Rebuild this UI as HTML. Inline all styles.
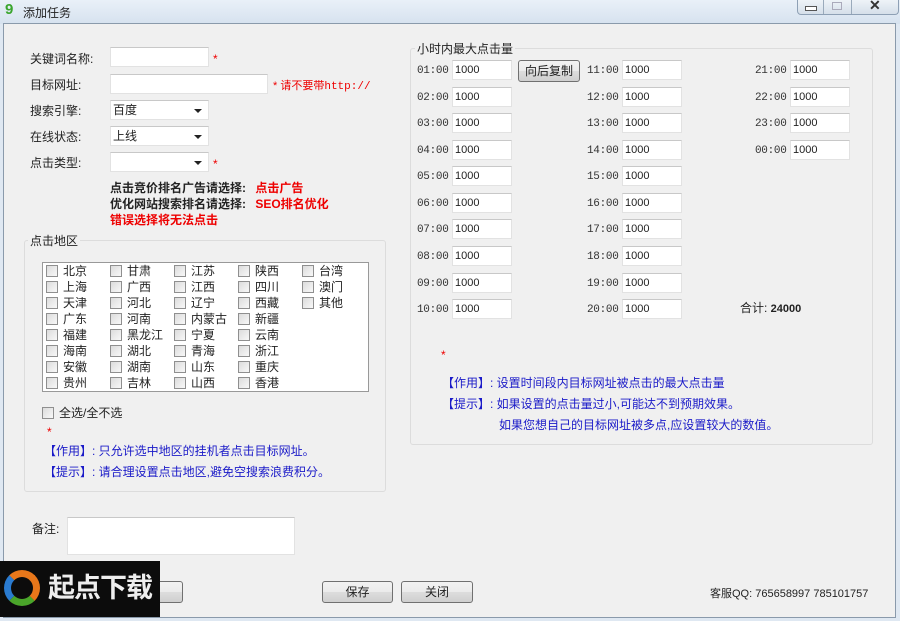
<!DOCTYPE html>
<html><head><meta charset="utf-8"><style>
*{margin:0;padding:0;box-sizing:border-box}
body{width:900px;height:621px;overflow:hidden;background:#dfe8f2;font-family:"Liberation Sans","Noto Sans CJK SC","WenQuanYi Zen Hei",sans-serif;font-size:12px;color:#222;position:relative}
.a{position:absolute;white-space:nowrap}
.title{left:0;top:0;width:900px;height:24px;background:linear-gradient(#e9f0f8,#d6e2ef)}
.win{left:3px;top:23px;width:893px;height:595px;background:#f0f0f0;border:1px solid #8a9aab}
.in{position:absolute;background:#fff;border:1px solid #e2e2e2;border-top-color:#c8c8c8;height:20px;font-size:11px;padding:2px 2px;line-height:15px}
.sel:after{content:"";position:absolute;right:6px;top:8px;border:4px solid transparent;border-top:4px solid #222;border-bottom:0}
.red{color:#e00}
.blue{color:#1a1ac8}
.grp{position:absolute;border:1px solid #dcdcdc;border-radius:3px}
.gl{position:absolute;background:#f0f0f0;padding:0 2px;font-size:12px}
.cb{display:inline-block;width:12px;height:12px;border:1px solid #8f8f8f;background:linear-gradient(135deg,#dcdcdc,#f8f8f8);vertical-align:-2px;margin-right:5px}
.btn{position:absolute;height:22px;border:1px solid #707070;border-radius:3px;background:linear-gradient(#f2f2f2,#ebebeb 50%,#dddddd 51%,#cfcfcf);text-align:center;line-height:20px;font-size:12px}
.h{font-family:"Liberation Mono","DejaVu Sans Mono",monospace;font-size:11px;color:#333;letter-spacing:-0.3px;line-height:14px}
.rg{line-height:16px;font-size:12px}
</style></head><body>
<div class="a title"></div>
<div class="a" style="left:5px;top:2px;color:#3aa52d;font-weight:bold;font-size:15px;line-height:16px">9</div>
<div class="a" style="left:23px;top:4px;font-size:12px">添加任务</div>
<div class="a" style="left:797px;top:0;width:102px;height:15px;border:1px solid #8ea0b5;border-top:0;border-radius:0 0 4px 4px;background:linear-gradient(#eef3f8,#d5dfea)"></div>
<div class="a" style="left:823px;top:0;width:1px;height:14px;background:#9aaabb"></div>
<div class="a" style="left:851px;top:0;width:1px;height:14px;background:#9aaabb"></div>
<div class="a" style="left:805px;top:6px;width:12px;height:5px;border:1px solid #555;background:#fff"></div>
<div class="a" style="left:832px;top:2px;width:10px;height:8px;border:1px solid #aab"></div>
<div class="a" style="left:869px;top:-3px;font-size:14px;font-weight:bold;color:#333">✕</div>
<div class="a win"></div>

<div class="a" style="left:30px;top:50px">关键词名称:</div>
<div class="in" style="left:110px;top:47px;width:99px"></div>
<div class="a red" style="left:213px;top:52px">*</div>
<div class="a" style="left:30px;top:76px">目标网址:</div>
<div class="in" style="left:110px;top:74px;width:158px"></div>
<div class="a red" style="left:273px;top:77px;font-size:11px">* 请不要带<span style="font-family:'Liberation Mono',monospace">http://</span></div>
<div class="a" style="left:30px;top:102px">搜索引擎:</div>
<div class="in sel" style="left:110px;top:100px;width:99px;font-size:12px">百度</div>
<div class="a" style="left:30px;top:128px">在线状态:</div>
<div class="in sel" style="left:110px;top:126px;width:99px;font-size:12px">上线</div>
<div class="a" style="left:30px;top:154px">点击类型:</div>
<div class="in sel" style="left:110px;top:152px;width:99px"></div>
<div class="a red" style="left:213px;top:157px">*</div>
<div class="a" style="left:110px;top:179px;font-weight:bold">点击竞价排名广告请选择: <span class="red" style="margin-left:6px">点击广告</span></div>
<div class="a" style="left:110px;top:195px;font-weight:bold">优化网站搜索排名请选择: <span class="red" style="margin-left:6px">SEO排名优化</span></div>
<div class="a red" style="left:110px;top:211px;font-weight:bold">错误选择将无法点击</div>

<div class="grp" style="left:24px;top:240px;width:362px;height:252px"></div>
<div class="gl" style="left:28px;top:232px">点击地区</div>
<div class="a" style="left:42px;top:262px;width:327px;height:130px;border:1px solid #999;background:#fff"></div>
<div class="a rg" style="left:46px;top:263px">
<span class="cb"></span>北京<br><span class="cb"></span>上海<br><span class="cb"></span>天津<br><span class="cb"></span>广东<br><span class="cb"></span>福建<br><span class="cb"></span>海南<br><span class="cb"></span>安徽<br><span class="cb"></span>贵州</div>
<div class="a rg" style="left:110px;top:263px">
<span class="cb"></span>甘肃<br><span class="cb"></span>广西<br><span class="cb"></span>河北<br><span class="cb"></span>河南<br><span class="cb"></span>黑龙江<br><span class="cb"></span>湖北<br><span class="cb"></span>湖南<br><span class="cb"></span>吉林</div>
<div class="a rg" style="left:174px;top:263px">
<span class="cb"></span>江苏<br><span class="cb"></span>江西<br><span class="cb"></span>辽宁<br><span class="cb"></span>内蒙古<br><span class="cb"></span>宁夏<br><span class="cb"></span>青海<br><span class="cb"></span>山东<br><span class="cb"></span>山西</div>
<div class="a rg" style="left:238px;top:263px">
<span class="cb"></span>陕西<br><span class="cb"></span>四川<br><span class="cb"></span>西藏<br><span class="cb"></span>新疆<br><span class="cb"></span>云南<br><span class="cb"></span>浙江<br><span class="cb"></span>重庆<br><span class="cb"></span>香港</div>
<div class="a rg" style="left:302px;top:263px">
<span class="cb"></span>台湾<br><span class="cb"></span>澳门<br><span class="cb"></span>其他</div>
<div class="a" style="left:42px;top:404px"><span class="cb"></span>全选/全不选</div>
<div class="a red" style="left:47px;top:425px">*</div>
<div class="a blue" style="left:44px;top:442px">【作用】: 只允许选中地区的挂机者点击目标网址。</div>
<div class="a blue" style="left:44px;top:463px">【提示】: 请合理设置点击地区,避免空搜索浪费积分。</div>

<div class="grp" style="left:410px;top:48px;width:463px;height:397px"></div>
<div class="gl" style="left:415px;top:40px">小时内最大点击量</div>
<div class="btn" style="left:518px;top:60px;width:62px">向后复制</div>

<div class="a h" style="left:417px;top:64px">01:00</div><div class="in" style="left:452px;top:60px;width:60px">1000</div>
<div class="a h" style="left:417px;top:91px">02:00</div><div class="in" style="left:452px;top:87px;width:60px">1000</div>
<div class="a h" style="left:417px;top:117px">03:00</div><div class="in" style="left:452px;top:113px;width:60px">1000</div>
<div class="a h" style="left:417px;top:144px">04:00</div><div class="in" style="left:452px;top:140px;width:60px">1000</div>
<div class="a h" style="left:417px;top:170px">05:00</div><div class="in" style="left:452px;top:166px;width:60px">1000</div>
<div class="a h" style="left:417px;top:197px">06:00</div><div class="in" style="left:452px;top:193px;width:60px">1000</div>
<div class="a h" style="left:417px;top:223px">07:00</div><div class="in" style="left:452px;top:219px;width:60px">1000</div>
<div class="a h" style="left:417px;top:250px">08:00</div><div class="in" style="left:452px;top:246px;width:60px">1000</div>
<div class="a h" style="left:417px;top:277px">09:00</div><div class="in" style="left:452px;top:273px;width:60px">1000</div>
<div class="a h" style="left:417px;top:303px">10:00</div><div class="in" style="left:452px;top:299px;width:60px">1000</div>

<div class="a h" style="left:587px;top:64px">11:00</div><div class="in" style="left:622px;top:60px;width:60px">1000</div>
<div class="a h" style="left:587px;top:91px">12:00</div><div class="in" style="left:622px;top:87px;width:60px">1000</div>
<div class="a h" style="left:587px;top:117px">13:00</div><div class="in" style="left:622px;top:113px;width:60px">1000</div>
<div class="a h" style="left:587px;top:144px">14:00</div><div class="in" style="left:622px;top:140px;width:60px">1000</div>
<div class="a h" style="left:587px;top:170px">15:00</div><div class="in" style="left:622px;top:166px;width:60px">1000</div>
<div class="a h" style="left:587px;top:197px">16:00</div><div class="in" style="left:622px;top:193px;width:60px">1000</div>
<div class="a h" style="left:587px;top:223px">17:00</div><div class="in" style="left:622px;top:219px;width:60px">1000</div>
<div class="a h" style="left:587px;top:250px">18:00</div><div class="in" style="left:622px;top:246px;width:60px">1000</div>
<div class="a h" style="left:587px;top:277px">19:00</div><div class="in" style="left:622px;top:273px;width:60px">1000</div>
<div class="a h" style="left:587px;top:303px">20:00</div><div class="in" style="left:622px;top:299px;width:60px">1000</div>

<div class="a h" style="left:755px;top:64px">21:00</div><div class="in" style="left:790px;top:60px;width:60px">1000</div>
<div class="a h" style="left:755px;top:91px">22:00</div><div class="in" style="left:790px;top:87px;width:60px">1000</div>
<div class="a h" style="left:755px;top:117px">23:00</div><div class="in" style="left:790px;top:113px;width:60px">1000</div>
<div class="a h" style="left:755px;top:144px">00:00</div><div class="in" style="left:790px;top:140px;width:60px">1000</div>
<div class="a" style="left:740px;top:299px">合计: <b style="font-size:11px">24000</b></div>

<div class="a red" style="left:441px;top:348px">*</div>
<div class="a blue" style="left:442px;top:374px">【作用】: 设置时间段内目标网址被点击的最大点击量</div>
<div class="a blue" style="left:442px;top:395px">【提示】: 如果设置的点击量过小,可能达不到预期效果。</div>
<div class="a blue" style="left:499px;top:416px">如果您想自己的目标网址被多点,应设置较大的数值。</div>

<div class="a" style="left:32px;top:520px">备注:</div>
<div class="in" style="left:67px;top:517px;width:228px;height:38px"></div>

<div class="btn" style="left:110px;top:581px;width:73px"></div>
<div class="btn" style="left:322px;top:581px;width:71px">保存</div>
<div class="btn" style="left:401px;top:581px;width:72px">关闭</div>
<div class="a" style="left:710px;top:585px;font-size:11px">客服QQ: 765658997 785101757</div>

<div class="a" style="left:0;top:561px;width:160px;height:56px;background:#0c0c0c"></div>
<div class="a" style="left:4px;top:570px;width:36px;height:36px;border-radius:50%;border:7px solid #e8771a;border-left-color:#2a7bd0;border-bottom-color:#4aa52a"></div>
<div class="a" style="left:48px;top:567px;width:110px;color:#eee;font-size:27px;font-weight:bold;letter-spacing:-1px;line-height:42px">起点下载</div>
</body></html>
